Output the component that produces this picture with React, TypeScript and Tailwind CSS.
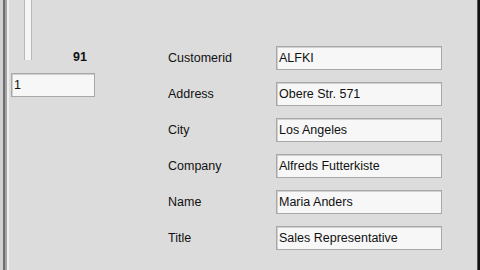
const fields = [
  { label: "Customerid", value: "ALFKI" },
  { label: "Address", value: "Obere Str. 571" },
  { label: "City", value: "Los Angeles" },
  { label: "Company", value: "Alfreds Futterkiste" },
  { label: "Name", value: "Maria Anders" },
  { label: "Title", value: "Sales Representative" },
];

export default function App() {
  return (
    <div
      className="flex h-[270px] w-[480px] overflow-hidden bg-[#dcdcdc] text-[12.5px] text-[#111]"
      style={{ fontFamily: '"Liberation Sans", Arial, sans-serif' }}
    >
      {/* window frame, left side */}
      <div className="w-[3px] bg-[#d2d2d2]" />
      <div className="w-[2px] bg-[#6e6e6e]" />
      <div className="w-[2px] bg-[#a4a4a4]" />
      <div className="w-[2px] bg-[#efefef]" />

      {/* navigator */}
      <div className="flex w-[90px] flex-col">
        <div className="flex h-[64px]">
          <div className="ml-[15px] h-[60px] w-[8px] border-x border-[#b8b8b8] bg-[#f6f6f6]" />
          <div className="flex flex-1 items-end justify-end pr-[12px] pb-[1px] font-bold leading-none">
            91
          </div>
        </div>
        <div className="mt-[9px] ml-[2px] flex h-[24px] w-[84px] items-center border border-[#a8a8a8] bg-[#f7f7f7] pl-[2px] shadow-[inset_1px_1px_0_#d0d0d0]">
          1
        </div>
      </div>

      {/* record form */}
      <div className="ml-[69px] flex flex-col gap-[12px] pt-[46px]">
        {fields.map((f) => (
          <div key={f.label} className="flex h-[24px] items-center">
            <div className="w-[108px]">{f.label}</div>
            <div className="flex h-[24px] w-[166px] items-center border border-[#a8a8a8] bg-[#f7f7f7] pl-[2px] shadow-[inset_1px_1px_0_#d0d0d0]">
              {f.value}
            </div>
          </div>
        ))}
      </div>

      <div className="flex-1" />
      <div className="w-[1px] bg-[#555]" />
      <div className="w-[2px] bg-[#111]" />
    </div>
  );
}
